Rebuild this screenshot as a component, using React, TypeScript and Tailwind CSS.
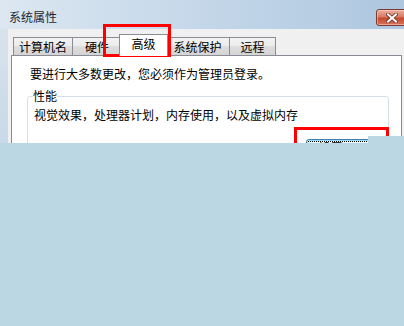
import React from "react";

function CloseButton() {
  return (
    <div className="mt-[9px] -mr-[4px] w-[32px] h-[17px] rounded-[3px] border border-[#7a3a30] bg-[linear-gradient(#eab0a0,#d87a64_45%,#c4492f_55%,#d8735a)] shadow-[inset_0_0_0_1px_rgba(255,220,210,0.5)] flex items-center justify-center">
      <svg width="12" height="10" viewBox="0 0 12 10">
        <path d="M2 1.5 L10 8.5 M10 1.5 L2 8.5" stroke="#6b3026" strokeWidth="3.6" strokeLinecap="square" />
        <path d="M2 1.5 L10 8.5 M10 1.5 L2 8.5" stroke="#ffffff" strokeWidth="2" strokeLinecap="square" />
      </svg>
    </div>
  );
}

function Tab({ label, w, cls }: { label: string; w: string; cls: string }) {
  return (
    <div
      className={`${w} ${cls} h-[18px] border border-b-0 border-[#898c95] bg-[linear-gradient(#f3f3f3,#ebebeb_50%,#dedede_50%,#d4d4d4)] pt-px text-center`}
    >
      {label}
    </div>
  );
}

export default function App() {
  return (
    <div className="relative w-[404px] h-[326px] overflow-hidden bg-[#bad7e3] font-['Noto_Sans_CJK_SC',sans-serif] text-[12px] leading-[16px] text-black">
      <div className="relative h-[143px] overflow-hidden flex flex-col">
        <div className="h-[29px] shrink-0 flex items-start justify-between bg-[linear-gradient(to_right,#dce7f1,#c4d7e9_50%,#aec7df)]">
          <span className="pl-[9px] pt-[9px] text-[#1b2733]">系统属性</span>
          <CloseButton />
        </div>
        <div className="flex flex-1">
          <div className="w-[8px] bg-[linear-gradient(#d9e3ec,#c3d6e6)]" />
          <div className="flex-1 bg-[#f0f0f0] pt-[5px] flex flex-col">
            <div className="h-[21px] pl-[5px] flex items-end">
              <Tab label="计算机名" w="w-[60px]" cls="" />
              <Tab label="硬件" w="w-[50px]" cls="-ml-px" />
              <div className="relative z-10 -ml-[3px] -mb-px w-[49px] h-[22px] border border-b-0 border-[#898c95] bg-white pt-px text-center">
                高级
              </div>
              <Tab label="系统保护" w="w-[65px]" cls="-ml-[3px]" />
              <Tab label="远程" w="w-[47px]" cls="-ml-px" />
            </div>
            <div className="flex-1 ml-[3px] mr-[2px] border border-[#898c95] bg-white pt-[10px] pl-[15px] pr-[12px]">
              <p className="pl-[3px]">要进行大多数更改，您必须作为管理员登录。</p>
              <fieldset className="mt-[6px] border border-[#d5dfe5] rounded-[3px] pl-[5px] pr-[7px] pb-[10px]">
                <legend className="px-0">性能</legend>
                <p className="mt-[3px] pl-px">视觉效果，处理器计划，内存使用，以及虚拟内存</p>
                <div className="mt-[16px] flex justify-end">
                  <div className="w-[75px] h-[23px] rounded-[3px] border border-[#3c7fb1] bg-[linear-gradient(#eaf6fd,#d9f0fc_50%,#bee6fd_50%,#a7d9f5)] shadow-[inset_0_0_0_1px_#9fdcf8] p-px">
                    <div className="h-full border border-dotted border-black text-center leading-[12px]">
                      设置(S)...
                    </div>
                  </div>
                </div>
              </fieldset>
            </div>
          </div>
        </div>
        <div className="absolute left-[103px] top-[24px] w-[68px] h-[33px] border-[3px] border-[#ff0000]" />
        <div className="absolute left-[294px] top-[127px] w-[95px] h-[30px] border-[3px] border-[#ff0000]" />
      </div>
      <div className="absolute left-[368px] top-[136px] w-[36px] h-[190px] bg-[#bad7e3]" />
    </div>
  );
}
